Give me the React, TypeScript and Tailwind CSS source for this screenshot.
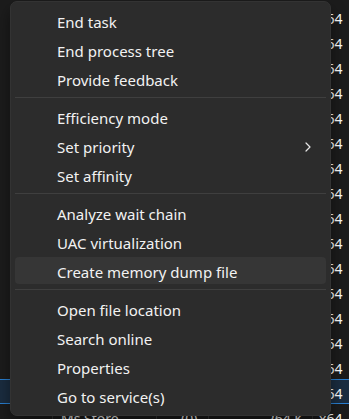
import React from 'react';

type MenuEntry = { label: string; submenu?: boolean; active?: boolean } | 'sep';

const menu: MenuEntry[] = [
  { label: 'End task' },
  { label: 'End process tree' },
  { label: 'Provide feedback' },
  'sep',
  { label: 'Efficiency mode' },
  { label: 'Set priority', submenu: true },
  { label: 'Set affinity' },
  'sep',
  { label: 'Analyze wait chain' },
  { label: 'UAC virtualization' },
  { label: 'Create memory dump file', active: true },
  'sep',
  { label: 'Open file location' },
  { label: 'Search online' },
  { label: 'Properties' },
  { label: 'Go to service(s)' },
];

// rows of the process table that sits behind the context menu
const rows = [
  { name: 'RuntimeBroker.exe', status: '', mem: '2,148 K' },
  { name: 'RuntimeBroker.exe', status: '', mem: '1,932 K' },
  { name: 'SearchHost.exe', status: '', mem: '48,520 K' },
  { name: 'SecurityHealthSystray.exe', status: '', mem: '612 K' },
  { name: 'ShellExperienceHost.exe', status: '', mem: '9,876 K' },
  { name: 'sihost.exe', status: '', mem: '5,204 K' },
  { name: 'smartscreen.exe', status: '', mem: '3,012 K' },
  { name: 'StartMenuExperienceHost.exe', status: '', mem: '21,404 K' },
  { name: 'svchost.exe', status: '', mem: '1,120 K' },
  { name: 'svchost.exe', status: '', mem: '2,884 K' },
  { name: 'svchost.exe', status: '', mem: '956 K' },
  { name: 'svchost.exe', status: '', mem: '4,420 K' },
  { name: 'taskhostw.exe', status: '', mem: '3,316 K' },
  { name: 'Taskmgr.exe', status: '', mem: '28,740 K' },
  { name: 'TextInputHost.exe', status: '', mem: '11,208 K' },
  { name: 'msedge.exe', status: '', mem: '52,116 K', selected: true },
  { name: 'Ms Store', status: '(0)', mem: '264 K' },
];

function Chevron() {
  return (
    <svg width="6" height="10" viewBox="0 0 6 10" fill="none">
      <path d="M1 1l4 4-4 4" stroke="#e6e6e6" strokeWidth="1.2" strokeLinecap="round" strokeLinejoin="round" />
    </svg>
  );
}

export default function App() {
  return (
    <div
      className="relative w-[349px] h-[419px] overflow-hidden bg-[#1c1c1c] text-white"
      style={{ fontFamily: '"Noto Sans", "Open Sans", sans-serif' }}
    >
      {/* table behind */}
      <div className="flex flex-col pt-[4px]">
        {rows.map((r, i) => (
          <div
            key={i}
            className={`flex h-[25px] shrink-0 text-[14px] leading-[20px] ${
              r.selected ? 'bg-[#1b2d40] border-y border-[#2a80d2]' : ''
            }`}
          >
            <div className="w-[52px] h-full" />
            <div className="w-[104px] h-full border-l border-[#363636] pl-[8px] pt-[5px] truncate">{r.name}</div>
            <div className="w-[52px] h-full border-l border-[#363636] pl-[24px] pt-[5px]">{r.status}</div>
            <div className="w-[104px] h-full border-l border-[#363636] pr-[9px] pt-[5px] text-right">{r.mem}</div>
            <div className={`flex-1 h-full border-l border-[#363636] pl-[6px] ${r.selected ? 'pt-[4px]' : 'pt-[5px]'}`}>x64</div>
          </div>
        ))}
      </div>

      {/* context menu */}
      <div className="absolute left-[10px] top-[1px] w-[321px] rounded-[7px] border border-[#333333] bg-[#2c2c2c] pt-[4px] pb-[5px] shadow-[0_8px_16px_rgba(0,0,0,0.45)]">
        {menu.map((m, i) =>
          m === 'sep' ? (
            <div key={i} className="mx-[4px] my-[4px] h-px bg-[#3f3f3f]" />
          ) : (
            <div key={i} className="h-[29px] px-[4px] py-px">
              <div
                className={`flex h-full items-center rounded-[4px] pl-[42px] pr-[15px] pt-[3px] text-[15px] text-[#f2f2f2] ${
                  m.active ? 'bg-[#363636]' : ''
                }`}
              >
                <span className="flex-1">{m.label}</span>
                {m.submenu && <Chevron />}
              </div>
            </div>
          )
        )}
      </div>
    </div>
  );
}
